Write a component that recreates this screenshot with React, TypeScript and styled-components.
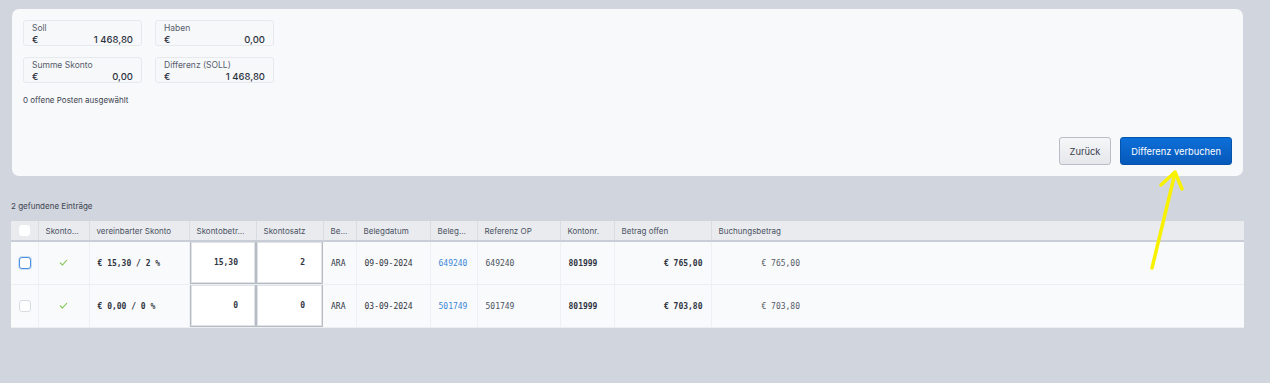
import React from 'react';
import styled, { createGlobalStyle } from 'styled-components';

const GlobalStyle = createGlobalStyle`
  html, body {
    margin: 0;
    padding: 0;
    background: #d1d5dd;
  }

  body {
    font-family: Inter, "Noto Sans", sans-serif;
    color: #2f3542;
  }
`;

const Page = styled.div`
  position: relative;
  width: 1270px;
  height: 383px;
  box-sizing: border-box;
  padding: 9px 26px 0 11px;
  overflow: hidden;
`;

const Panel = styled.section`
  margin: 0 1px;
  height: 167px;
  box-sizing: border-box;
  padding: 11px;
  background: #f8f9fb;
  border-radius: 7px;
  display: flex;
  flex-direction: column;
`;

const SummaryGrid = styled.div`
  display: grid;
  grid-template-columns: 119px 119px;
  column-gap: 13px;
  row-gap: 11px;
`;

const SummaryBox = styled.div`
  height: 26px;
  box-sizing: border-box;
  padding: 2px 8px 0 8px;
  border: 1px solid #e6e9ee;
  border-radius: 3px;
  background: #f7f8fa;
  display: flex;
  flex-direction: column;
`;

const SummaryLabel = styled.span`
  font-size: 8.5px;
  line-height: 11px;
  color: #565d6c;
`;

const SummaryValue = styled.div`
  display: flex;
  justify-content: space-between;
  font-size: 9.5px;
  line-height: 11px;
  font-weight: 500;
  color: #2c3240;
`;

const Hint = styled.p`
  margin: 12px 0 0 0;
  font-size: 8px;
  line-height: 11px;
  color: #3d4352;
`;

const Actions = styled.div`
  margin-top: auto;
  display: flex;
  justify-content: flex-end;
  gap: 9px;
`;

const Button = styled.button<{ $primary?: boolean }>`
  height: 28px;
  box-sizing: border-box;
  padding: 0 10px;
  border-radius: 3px;
  font-family: Inter, "Noto Sans", sans-serif;
  font-size: 9.3px;
  border: 1px solid ${(p) => (p.$primary ? '#0553aa' : '#b9bdc5')};
  color: ${(p) => (p.$primary ? '#ffffff' : '#3a404e')};
  background: ${(p) =>
    p.$primary
      ? 'linear-gradient(#0d6fd9, #0659b9)'
      : 'linear-gradient(#f5f6f8, #e5e7eb)'};
`;

const Count = styled.div`
  margin: 25px 0 0 0;
  font-size: 8px;
  line-height: 11px;
  color: #3d4352;
`;

const Table = styled.table`
  margin-top: 9px;
  width: 1233px;
  table-layout: fixed;
  border-collapse: collapse;
  font-size: 8px;
`;

const HeadCell = styled.th`
  height: 20px;
  padding: 0 7px;
  box-sizing: border-box;
  background: #e9ebef;
  border-right: 1px solid #d9dce2;
  border-bottom: 2px solid #c9cdd5;
  text-align: left;
  font-weight: 400;
  font-size: 8px;
  color: #4a5161;
  white-space: nowrap;
  overflow: hidden;
  text-overflow: ellipsis;

  &:nth-last-child(-n + 2) {
    border-right: none;
  }
`;

const Row = styled.tr`
  background: #f9fafb;
  border-bottom: 1px solid #eceef2;
`;

const Cell = styled.td<{ $align?: 'left' | 'right' | 'center'; $bold?: boolean; $tone?: string }>`
  height: 42px;
  padding: 0 8px;
  box-sizing: border-box;
  border-right: 1px solid #eef0f3;
  text-align: ${(p) => p.$align || 'left'};
  font-family: "DejaVu Sans Mono", "Liberation Mono", monospace;
  font-size: 8px;
  font-weight: ${(p) => (p.$bold ? 700 : 400)};
  color: ${(p) => p.$tone || '#2f3542'};
  white-space: nowrap;
  overflow: hidden;

  &:nth-last-child(-n + 2) {
    border-right: none;
  }
`;

const InputCell = styled.td`
  height: 42px;
  padding: 0;
  box-sizing: border-box;
`;

const FieldBox = styled.div`
  height: 43px;
  box-sizing: border-box;
  margin-top: -1px;
  padding-right: 17px;
  display: flex;
  align-items: center;
  justify-content: flex-end;
  background: #ffffff;
  border: 1px solid #b6bbc4;
  box-shadow: inset 0 0 0 1px #dfe2e7;
  font-family: "DejaVu Sans Mono", "Liberation Mono", monospace;
  font-size: 8px;
  font-weight: 700;
  color: #2f3542;
`;

const Checkbox = styled.span<{ $focused?: boolean; $small?: boolean }>`
  display: block;
  margin: 0 auto;
  width: ${(p) => (p.$small ? '11px' : '12px')};
  height: ${(p) => (p.$small ? '11px' : '12px')};
  box-sizing: border-box;
  border-radius: 3px;
  background: #ffffff;
  border: 1px solid ${(p) => (p.$focused ? '#4d8fdc' : p.$small ? '#ffffff' : '#d8dbe1')};
  box-shadow: ${(p) => (p.$focused ? '0 0 0 1px rgba(77,143,220,0.25)' : 'none')};
`;

const Arrow = styled.svg`
  position: absolute;
  left: 0;
  top: 0;
  pointer-events: none;
`;

const Check = () => (
  <svg width="9" height="7" viewBox="0 0 9 7">
    <polyline points="1,3.6 3.4,6 8,1" fill="none" stroke="#7cc24a" strokeWidth="1.1" />
  </svg>
);

interface Entry {
  checked: boolean;
  agreed: string;
  amount: string;
  rate: string;
  type: string;
  date: string;
  doc: string;
  ref: string;
  account: string;
  open: string;
  booking: string;
}

const entries: Entry[] = [
  { checked: true, agreed: '€ 15,30 / 2 %', amount: '15,30', rate: '2', type: 'ARA', date: '09-09-2024', doc: '649240', ref: '649240', account: '801999', open: '€ 765,00', booking: '€ 765,00' },
  { checked: false, agreed: '€ 0,00 / 0 %', amount: '0', rate: '0', type: 'ARA', date: '03-09-2024', doc: '501749', ref: '501749', account: '801999', open: '€ 703,80', booking: '€ 703,80' },
];

const widths = [27, 51, 100, 67, 67, 33, 74, 47, 83, 54, 97, 97];

const summary = [
  { label: 'Soll', value: '1 468,80' },
  { label: 'Haben', value: '0,00' },
  { label: 'Summe Skonto', value: '0,00' },
  { label: 'Differenz (SOLL)', value: '1 468,80' },
];

const App: React.FC = () => (
  <Page>
    <GlobalStyle />
    <Panel>
      <SummaryGrid>
        {summary.map((s) => (
          <SummaryBox key={s.label}>
            <SummaryLabel>{s.label}</SummaryLabel>
            <SummaryValue>
              <span>€</span>
              <span>{s.value}</span>
            </SummaryValue>
          </SummaryBox>
        ))}
      </SummaryGrid>
      <Hint>0 offene Posten ausgewählt</Hint>
      <Actions>
        <Button>Zurück</Button>
        <Button $primary>Differenz verbuchen</Button>
      </Actions>
    </Panel>

    <Count>2 gefundene Einträge</Count>

    <Table>
      <colgroup>
        {widths.map((w, i) => (
          <col key={i} style={{ width: w }} />
        ))}
        <col />
      </colgroup>
      <thead>
        <tr>
          <HeadCell>
            <Checkbox $small />
          </HeadCell>
          <HeadCell>Skonto…</HeadCell>
          <HeadCell>vereinbarter Skonto</HeadCell>
          <HeadCell>Skontobetr…</HeadCell>
          <HeadCell>Skontosatz</HeadCell>
          <HeadCell>Be…</HeadCell>
          <HeadCell>Belegdatum</HeadCell>
          <HeadCell>Beleg…</HeadCell>
          <HeadCell>Referenz OP</HeadCell>
          <HeadCell>Kontonr.</HeadCell>
          <HeadCell>Betrag offen</HeadCell>
          <HeadCell>Buchungsbetrag</HeadCell>
          <HeadCell />
        </tr>
      </thead>
      <tbody>
        {entries.map((e) => (
          <Row key={e.doc}>
            <Cell $align="center">
              <Checkbox $focused={e.checked} />
            </Cell>
            <Cell $align="center">
              <Check />
            </Cell>
            <Cell $bold>{e.agreed}</Cell>
            <InputCell>
              <FieldBox>{e.amount}</FieldBox>
            </InputCell>
            <InputCell>
              <FieldBox>{e.rate}</FieldBox>
            </InputCell>
            <Cell>{e.type}</Cell>
            <Cell>{e.date}</Cell>
            <Cell $tone="#3a86d8">{e.doc}</Cell>
            <Cell $tone="#4b5260">{e.ref}</Cell>
            <Cell $bold>{e.account}</Cell>
            <Cell $align="right" $bold>{e.open}</Cell>
            <Cell $align="right" $tone="#555b68">{e.booking}</Cell>
            <Cell />
          </Row>
        ))}
      </tbody>
    </Table>

    <Arrow width="1270" height="383" viewBox="0 0 1270 383">
      <g fill="none" stroke="#f8f200" strokeWidth="3.5" strokeLinecap="round" strokeLinejoin="round">
        <line x1="1152" y1="268" x2="1175" y2="173" />
        <polyline points="1161,185 1175,172 1182,189" />
      </g>
    </Arrow>
  </Page>
);

export default App;
